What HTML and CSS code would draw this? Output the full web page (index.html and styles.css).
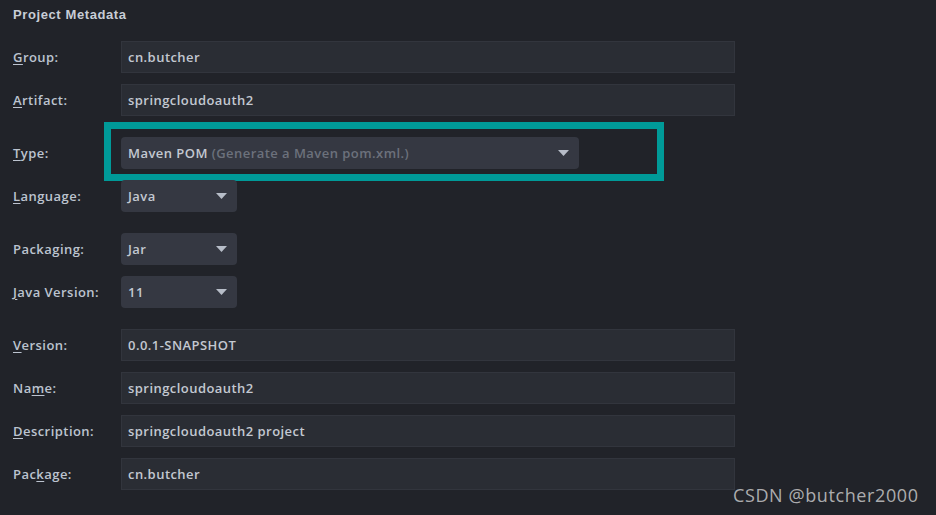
FILE: index.html
```html
<!DOCTYPE html>
<html>
<head>
<meta charset="utf-8">
<link rel="stylesheet" href="styles.css">
</head>
<body>
<div class="panel">
  <div class="title">Project Metadata</div>
  <div class="form">
    <div class="row">
      <label class="label"><u>G</u>roup:</label>
      <div class="field wide">cn.butcher</div>
    </div>
    <div class="row">
      <label class="label"><u>A</u>rtifact:</label>
      <div class="field wide">springcloudoauth2</div>
    </div>
    <div class="row group-start">
      <label class="label"><u>T</u>ype:</label>
      <div class="select type">
        <span class="value">Maven POM <span class="hint">(Generate a Maven pom.xml.)</span></span>
        <svg class="arrow" width="11" height="6" viewBox="0 0 11 6"><polygon points="0,0 11,0 5.5,6" fill="#b7bdc8"/></svg>
        <div class="highlight"></div>
      </div>
    </div>
    <div class="row">
      <label class="label"><u>L</u>anguage:</label>
      <div class="select small">
        <span class="value">Java</span>
        <svg class="arrow" width="11" height="6" viewBox="0 0 11 6"><polygon points="0,0 11,0 5.5,6" fill="#b7bdc8"/></svg>
      </div>
    </div>
    <div class="row group-start">
      <label class="label">Packaging:</label>
      <div class="select small">
        <span class="value">Jar</span>
        <svg class="arrow" width="11" height="6" viewBox="0 0 11 6"><polygon points="0,0 11,0 5.5,6" fill="#b7bdc8"/></svg>
      </div>
    </div>
    <div class="row">
      <label class="label"><u>J</u>ava Version:</label>
      <div class="select small">
        <span class="value">11</span>
        <svg class="arrow" width="11" height="6" viewBox="0 0 11 6"><polygon points="0,0 11,0 5.5,6" fill="#b7bdc8"/></svg>
      </div>
    </div>
    <div class="row group-start">
      <label class="label"><u>V</u>ersion:</label>
      <div class="field wide">0.0.1-SNAPSHOT</div>
    </div>
    <div class="row">
      <label class="label">Na<u>m</u>e:</label>
      <div class="field wide">springcloudoauth2</div>
    </div>
    <div class="row">
      <label class="label"><u>D</u>escription:</label>
      <div class="field wide">springcloudoauth2 project</div>
    </div>
    <div class="row">
      <label class="label">Pac<u>k</u>age:</label>
      <div class="field wide">cn.butcher</div>
    </div>
  </div>
</div>
<div class="watermark">CSDN @butcher2000</div>
</body>
</html>
```

FILE: styles.css
```css
html, body {
  margin: 0;
  padding: 0;
  background: #212329;
  width: 936px;
  height: 515px;
  overflow: hidden;
}

body {
  position: relative;
  font-family: "Open Sans", "Liberation Sans", sans-serif;
  color: #c3c8d1;
}

.panel {
  padding: 7px 0 0 13px;
}

.title {
  font-family: "Liberation Sans", sans-serif;
  font-weight: bold;
  font-size: 13px;
  line-height: 16px;
  color: #c8cdd6;
  letter-spacing: 0.6px;
  margin-bottom: 18px;
}

.form {
  display: flex;
  flex-direction: column;
  gap: 11px;
}

.row {
  display: flex;
  align-items: center;
}

.row.group-start {
  margin-top: 10px;
}

.label {
  width: 108px;
  flex: none;
  font-size: 13px;
  font-weight: 600;
  letter-spacing: 0.45px;
  color: #bcc3cf;
}

.label u {
  text-decoration-thickness: 1px;
  text-underline-offset: 2px;
}

.field {
  box-sizing: border-box;
  height: 32px;
  border: 1px solid #32353d;
  background: #2a2d34;
  display: flex;
  align-items: center;
  padding-left: 6px;
  font-size: 13px;
  font-weight: 600;
  letter-spacing: 0.45px;
  color: #c3c8d1;
}

.field.wide {
  width: 614px;
}

.select {
  position: relative;
  box-sizing: border-box;
  height: 32px;
  background: #353842;
  border-radius: 4px;
  display: flex;
  align-items: center;
  justify-content: space-between;
  padding: 0 10px 0 7px;
  font-size: 13px;
  font-weight: 600;
  letter-spacing: 0.45px;
  color: #c3c8d1;
}

.select.type {
  width: 458px;
}

.select.small {
  width: 116px;
}

.hint {
  color: #6c717c;
}

.arrow {
  flex: none;
}

.highlight {
  position: absolute;
  left: -17px;
  top: -15px;
  width: 560px;
  height: 59px;
  box-sizing: border-box;
  border: 7px solid #009a98;
  pointer-events: none;
}

.watermark {
  position: absolute;
  left: 733px;
  top: 483px;
  font-family: "Open Sans", "DejaVu Sans", sans-serif;
  font-size: 18px;
  line-height: 24px;
  letter-spacing: 0.6px;
  color: rgba(210, 210, 210, 0.8);
}
```
